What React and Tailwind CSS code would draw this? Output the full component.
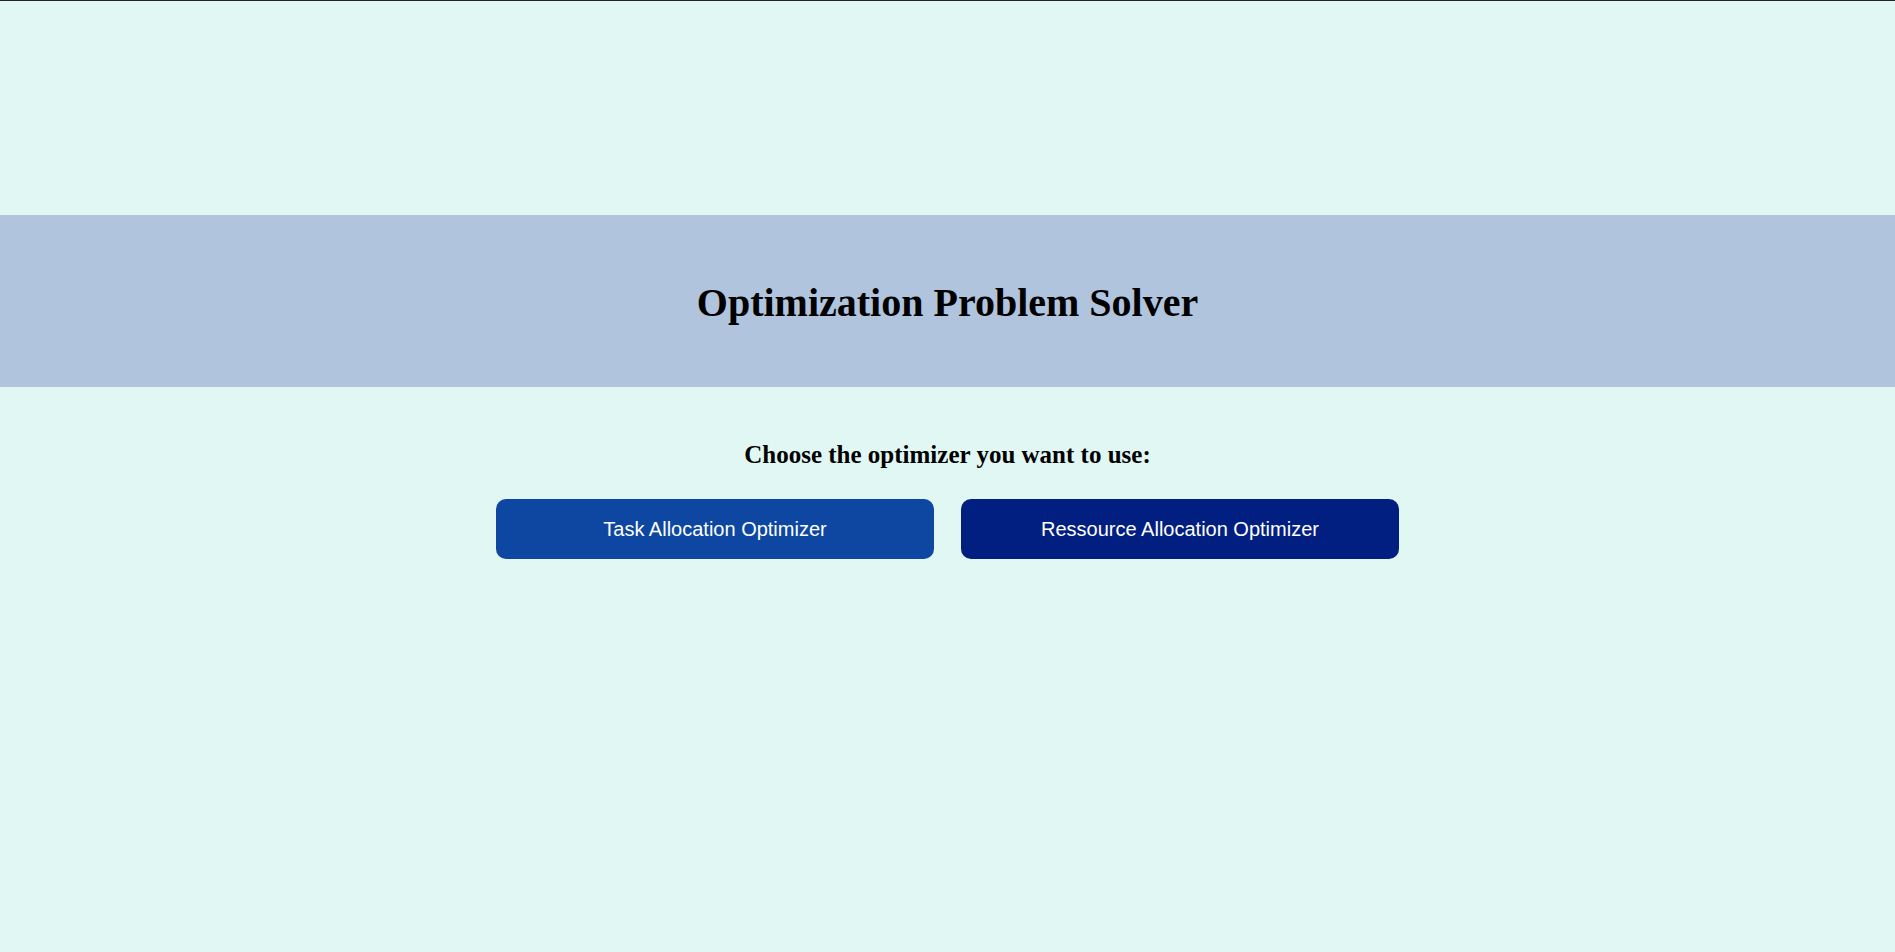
export default function App() {
  return (
    <div className="min-h-[952px] w-full bg-[#e0f7f4] border-t border-[#222222]">
      <div className="h-[214px]" />
      <header className="h-[172px] bg-[#b0c4de] flex items-center justify-center pt-[4px]">
        <h1 className="text-[40px] font-bold text-black font-['Liberation_Serif','Times_New_Roman',serif]">
          Optimization Problem Solver
        </h1>
      </header>
      <main className="flex flex-col items-center pt-[53px]">
        <h2 className="text-[25px] font-bold text-black leading-[30px] font-['Liberation_Serif','Times_New_Roman',serif]">
          Choose the optimizer you want to use:
        </h2>
        <div className="flex gap-[27px] mt-[29px] font-['Liberation_Sans',Arial,sans-serif]">
          <button className="w-[438px] h-[60px] rounded-[10px] bg-[#0d47a1] text-white text-[20px]">
            Task Allocation Optimizer
          </button>
          <button className="w-[438px] h-[60px] rounded-[10px] bg-[#011f80] text-white text-[20px]">
            Ressource Allocation Optimizer
          </button>
        </div>
      </main>
    </div>
  );
}
